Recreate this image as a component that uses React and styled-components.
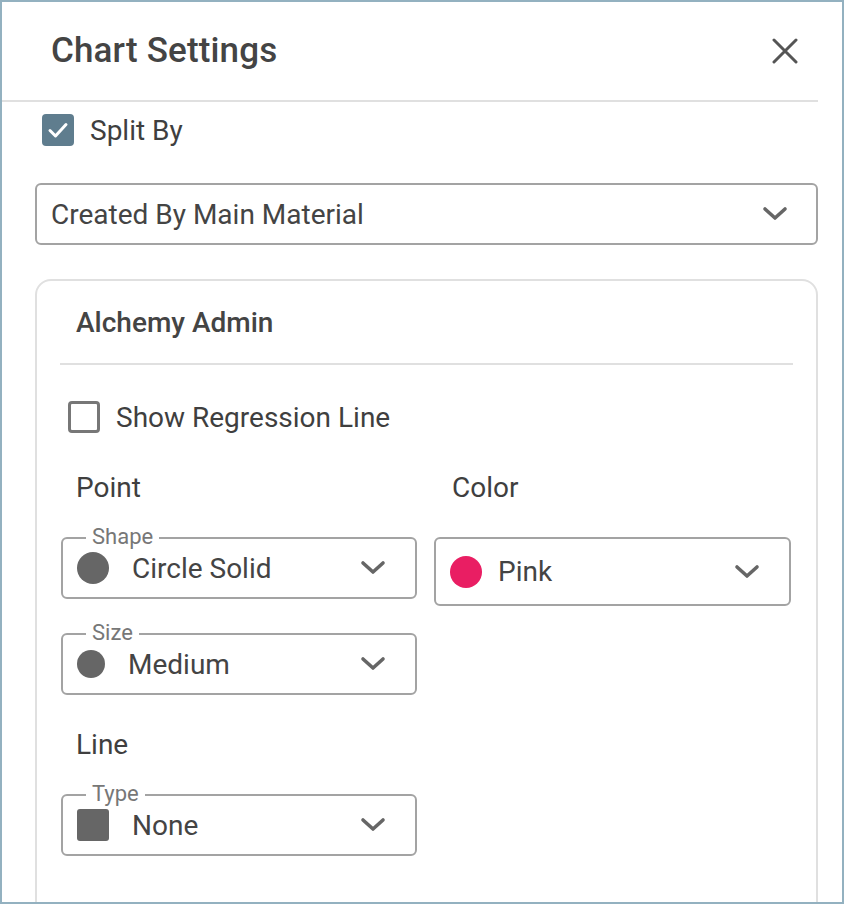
import React from "react";
import styled, { createGlobalStyle } from "styled-components";

const GlobalStyle = createGlobalStyle`
  * { box-sizing: border-box; }
  html, body { margin: 0; padding: 0; background: #fff; }
  body { font-family: Roboto, "Liberation Sans", sans-serif; color: #444; }
`;

const Frame = styled.div`
  width: 844px;
  height: 904px;
  border: 2px solid #93b1c0;
  overflow: hidden;
  background: #fff;
  padding-right: 24px;
`;

const Header = styled.div`
  height: 100px;
  display: flex;
  align-items: center;
  justify-content: space-between;
  padding: 0 19px 0 49px;
  border-bottom: 2px solid #e0e0e0;
`;

const Title = styled.h1`
  margin: 0;
  font-size: 35px;
  line-height: 40px;
  font-weight: 500;
  color: #444;
  letter-spacing: 0.15px;
`;

const CloseButton = styled.button`
  border: 0;
  background: none;
  padding: 0;
  width: 28px;
  height: 28px;
  display: flex;
  align-items: center;
  justify-content: center;
  cursor: pointer;
`;

const Body = styled.div`
  padding: 0 0 0 33px;
`;

const CheckRow = styled.label`
  display: flex;
  align-items: center;
  gap: 16px;
  margin-top: ${(p) => p.$top}px;
  padding-left: ${(p) => p.$indent}px;
  font-size: 28px;
  color: #3f3f3f;
  height: 32px;
`;

const Box = styled.span`
  flex: none;
  width: 32px;
  height: 32px;
  border-radius: 4px;
  display: flex;
  align-items: center;
  justify-content: center;
  background: ${(p) => (p.$checked ? "#5f7d8e" : "#fff")};
  border: ${(p) => (p.$checked ? "none" : "3px solid #777")};
`;

const MainSelect = styled.div`
  margin-top: 37px;
  height: 62px;
  border: 2px solid #a3a3a3;
  border-radius: 6px;
  display: flex;
  align-items: center;
  justify-content: space-between;
  padding: 0 28px 0 14px;
  font-size: 28px;
  color: #444;
`;

const Card = styled.div`
  margin-top: 34px;
  border: 2px solid #e0e0e0;
  border-radius: 16px;
  padding: 0 23px 200px 23px;
`;

const CardTitle = styled.div`
  height: 84px;
  display: flex;
  align-items: center;
  padding-left: 16px;
  font-size: 28px;
  font-weight: 500;
  color: #444;
  border-bottom: 2px solid #e0e0e0;
`;

const Grid = styled.div`
  display: grid;
  grid-template-columns: 356px 357px;
  column-gap: 17px;
  margin-top: 41px;
  padding-left: 1px;
`;

const Column = styled.div`
  display: flex;
  flex-direction: column;
`;

const GroupLabel = styled.div`
  font-size: 28px;
  line-height: 28px;
  color: #3f3f3f;
  padding-left: ${(p) => p.$indent}px;
  margin-top: ${(p) => p.$top || 0}px;
`;

const Field = styled.div`
  position: relative;
  margin-top: ${(p) => p.$top}px;
  height: ${(p) => p.$height}px;
  border: 2px solid #a3a3a3;
  border-radius: 6px;
  display: flex;
  align-items: center;
  padding: 0 29px 0 14px;
  font-size: 28px;
  color: #444;
`;

const Legend = styled.span`
  position: absolute;
  left: 23px;
  top: -15px;
  padding: 0 6px;
  background: #fff;
  font-size: 22px;
  line-height: 26px;
  color: #777;
`;

const Swatch = styled.span`
  flex: none;
  width: ${(p) => p.$size}px;
  height: ${(p) => p.$size}px;
  border-radius: ${(p) => (p.$square ? "3px" : "50%")};
  background: ${(p) => p.$color};
  margin-right: ${(p) => p.$gap}px;
`;

const Value = styled.span`
  flex: 1;
`;

const Chevron = () => (
  <svg width="26" height="16" viewBox="0 0 26 16">
    <path d="M3 3 L13 12 L23 3" fill="none" stroke="#666" strokeWidth="3.6" strokeLinecap="round" strokeLinejoin="round" />
  </svg>
);

const Check = () => (
  <svg width="24" height="24" viewBox="0 0 24 24">
    <path d="M4 12.5 L9.5 18 L20 6.5" fill="none" stroke="#fff" strokeWidth="3" strokeLinecap="round" strokeLinejoin="round" />
  </svg>
);

const CloseIcon = () => (
  <svg width="26" height="26" viewBox="0 0 26 26">
    <path d="M2 2 L24 24 M24 2 L2 24" stroke="#555" strokeWidth="3" strokeLinecap="round" />
  </svg>
);

const SelectField = ({ legend, swatch, value, top, height = 62, gap = 23 }) => (
  <Field $top={top} $height={height}>
    {legend && <Legend>{legend}</Legend>}
    <Swatch $size={swatch.size} $color={swatch.color} $square={swatch.square} $gap={gap} />
    <Value>{value}</Value>
    <Chevron />
  </Field>
);

export default function App() {
  return (
    <>
      <GlobalStyle />
      <Frame>
        <Header>
          <Title>Chart Settings</Title>
          <CloseButton aria-label="Close">
            <CloseIcon />
          </CloseButton>
        </Header>
        <Body>
          <CheckRow $top={12} $indent={7}>
            <Box $checked>
              <Check />
            </Box>
            Split By
          </CheckRow>
          <MainSelect>
            <span>Created By Main Material</span>
            <Chevron />
          </MainSelect>
          <Card>
            <CardTitle>Alchemy Admin</CardTitle>
            <CheckRow $top={36} $indent={8}>
              <Box />
              Show Regression Line
            </CheckRow>
            <Grid>
              <Column>
                <GroupLabel $indent={15}>Point</GroupLabel>
                <SelectField
                  top={35}
                  legend="Shape"
                  swatch={{ size: 32, color: "#666" }}
                  value="Circle Solid"
                />
                <SelectField
                  top={34}
                  legend="Size"
                  swatch={{ size: 28, color: "#666" }}
                  value="Medium"
                />
                <GroupLabel $indent={15} $top={36}>
                  Line
                </GroupLabel>
                <SelectField
                  top={35}
                  legend="Type"
                  swatch={{ size: 32, color: "#666", square: true }}
                  value="None"
                />
              </Column>
              <Column>
                <GroupLabel $indent={18}>Color</GroupLabel>
                <SelectField
                  top={35}
                  height={69}
                  gap={16}
                  swatch={{ size: 32, color: "#e91e63" }}
                  value="Pink"
                />
              </Column>
            </Grid>
          </Card>
        </Body>
      </Frame>
    </>
  );
}
